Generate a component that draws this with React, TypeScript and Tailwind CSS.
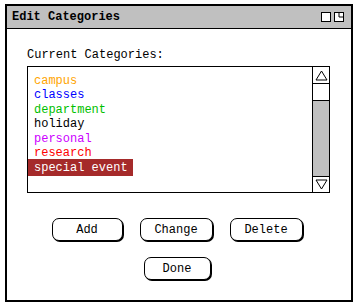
import React from "react";

const mono = { fontFamily: '"Liberation Mono", "DejaVu Sans Mono", monospace' };

const items: { label: string; color: string; selected?: boolean }[] = [
  { label: "campus", color: "text-[#ffa500]" },
  { label: "classes", color: "text-[#0000ff]" },
  { label: "department", color: "text-[#00c000]" },
  { label: "holiday", color: "text-black" },
  { label: "personal", color: "text-[#cc00ff]" },
  { label: "research", color: "text-[#ff0000]" },
  { label: "special event", color: "text-white", selected: true },
];

function Btn({ label, w }: { label: string; w: string }) {
  return (
    <div
      className={`${w} h-[23px] flex items-center justify-center border border-black rounded-[7px] bg-white shadow-[1px_1px_0_#000] text-[12px] text-black`}
    >
      {label}
    </div>
  );
}

export default function App() {
  return (
    <div className="w-[355px] h-[304px] bg-white pt-[4px] pl-[5px]" style={mono}>
      <div className="w-[348px] h-[298px] border-2 border-black flex flex-col bg-white">
        <div className="h-[23px] bg-[#c0c0c0] border-b border-black flex items-center justify-between pl-[5px] pr-[7px]">
          <span className="text-[12px] font-bold text-black leading-none">Edit Categories</span>
          <div className="flex gap-[3px]">
            <div className="w-[10px] h-[10px] border border-black bg-white" />
            <svg width="10" height="10" viewBox="0 0 10 10" className="block">
              <rect x="0.5" y="0.5" width="9" height="9" fill="white" stroke="black" />
              <path d="M5 0.5 V5 H9.5" fill="none" stroke="black" />
            </svg>
          </div>
        </div>
        <div className="pl-[20px] mt-[19px] text-[12px] leading-[14px] text-black">Current Categories:</div>
        <div className="ml-[20px] mt-[4px] w-[303px] h-[127px] border border-black flex">
          <div className="flex-1 pt-[6.5px] text-[12px]">
            {items.map((it) =>
              it.selected ? (
                <div key={it.label} className="h-[14.5px] flex items-center">
                  <span className={`h-[17px] flex items-center pl-[6px] pr-[5px] bg-[#a52a2a] ${it.color}`}>
                    {it.label}
                  </span>
                </div>
              ) : (
                <div key={it.label} className={`h-[14.5px] flex items-center pl-[6px] ${it.color}`}>
                  {it.label}
                </div>
              )
            )}
          </div>
          <div className="w-[17px] border-l border-black bg-[#c0c0c0] flex flex-col">
            <div className="h-[17px] bg-white border-b border-black flex items-center justify-center">
              <svg width="13" height="11" viewBox="0 0 13 11">
                <path d="M6.5 1 L12 10 H1 Z" fill="white" stroke="black" strokeWidth="1" />
              </svg>
            </div>
            <div className="h-[17px] bg-white border-b border-black" />
            <div className="flex-1" />
            <div className="h-[16px] bg-white border-t border-black flex items-center justify-center">
              <svg width="13" height="11" viewBox="0 0 13 11">
                <path d="M6.5 10 L12 1 H1 Z" fill="white" stroke="black" strokeWidth="1" />
              </svg>
            </div>
          </div>
        </div>
        <div className="mt-[25px] flex justify-center gap-[17px] pr-[4px]">
          <Btn label="Add" w="w-[71px]" />
          <Btn label="Change" w="w-[73px]" />
          <Btn label="Delete" w="w-[73px]" />
        </div>
        <div className="mt-[16px] flex justify-center pr-[4px]">
          <Btn label="Done" w="w-[67px]" />
        </div>
      </div>
    </div>
  );
}
